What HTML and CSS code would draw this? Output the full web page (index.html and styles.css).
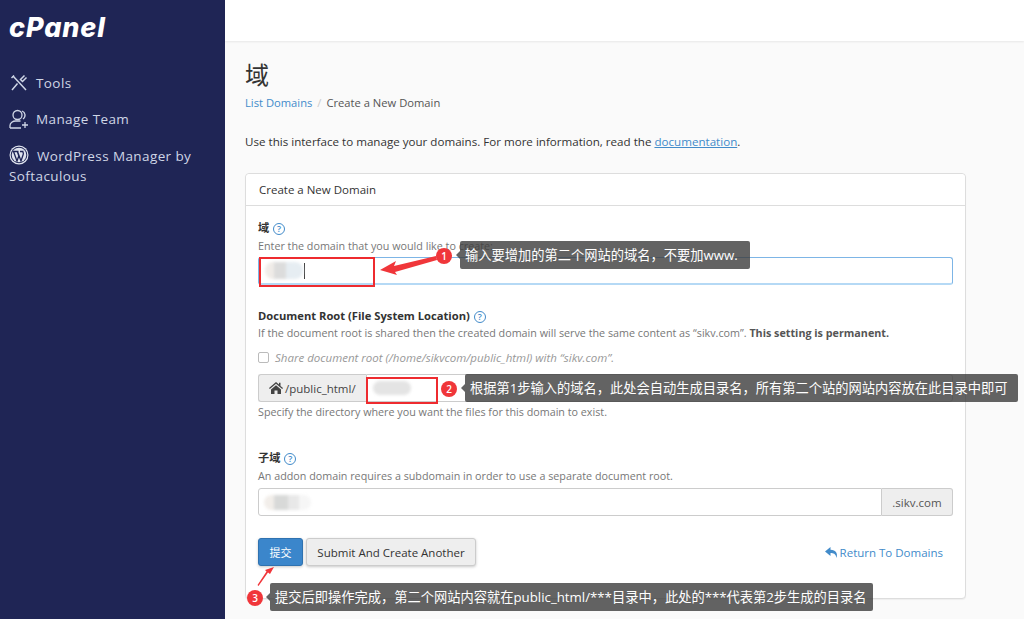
FILE: index.html
```html
<!DOCTYPE html>
<html lang="zh">
<head>
<meta charset="utf-8">
<title>cPanel - 域</title>
<link rel="stylesheet" href="styles.css">
</head>
<body>
<div class="app">
  <aside class="sidebar">
    <div class="logo">cPanel</div>
    <nav class="nav">
      <a class="nav-item">
        <svg class="nav-icon" viewBox="0 0 20 20" fill="none" stroke="#cfd6e6" stroke-width="1.5"><path d="M4 3l13 14M15.500 2.500l-4 4 2 2 4-4M8.500 10.500L3 17"/><path d="M2.500 5L5 2.500"/></svg>
        <span>Tools</span>
      </a>
      <a class="nav-item">
        <svg class="nav-icon" viewBox="0 0 20 20" fill="none" stroke="#cfd6e6" stroke-width="1.300"><circle cx="8.500" cy="6" r="4.500"/><path d="M13 2a4.500 4.500 0 0 1 1 8M1 19v-2.500c0-2.500 3-4.500 5.500-4.500h5M1 19h11M16 13v6M13 16h6"/></svg>
        <span>Manage Team</span>
      </a>
      <a class="nav-item wp">
        <svg class="nav-icon wp-icon" viewBox="0 0 20 20"><circle cx="10" cy="10" r="9.500" fill="#dfe3ee"/><circle cx="10" cy="10" r="8.300" fill="#1f2555"/><circle cx="10" cy="10" r="7.300" fill="#dfe3ee"/><path d="M4.500 6.500L8 16l1.800-5-1.300-4M8.500 6.500L12 16l2.200-6.500c.5-1.500-.3-3-1-3M3.500 6.500h6M11 6.500h3.500" fill="none" stroke="#1f2555" stroke-width="1.300"/></svg>
        <span>WordPress Manager by Softaculous</span>
      </a>
    </nav>
  </aside>
  <div class="main">
    <header class="topbar"></header>
    <main class="content">
      <h1 class="title">域</h1>
      <ol class="crumbs">
        <li><a>List Domains</a></li>
        <li class="sep">/</li>
        <li>Create a New Domain</li>
      </ol>
      <p class="intro">Use this interface to manage your domains. For more information, read the <a class="doc">documentation</a>.</p>
      <section class="panel">
        <div class="panel-head">Create a New Domain</div>
        <div class="panel-body">
          <div class="field f1">
            <label class="lbl">域 <span class="help">?</span></label>
            <div class="hint">Enter the domain that you would like to create:</div>
            <div class="input focus"><span class="blur b1"></span><span class="caret"></span></div>
          </div>
          <div class="field f2">
            <label class="lbl">Document Root (File System Location) <span class="help">?</span></label>
            <div class="hint">If the document root is shared then the created domain will serve the same content as “sikv.com”. <b>This setting is permanent.</b></div>
            <div class="check"><span class="box"></span><i>Share document root (/home/sikvcom/public_html) with “sikv.com”.</i></div>
            <div class="group">
              <span class="addon left"><svg class="home" viewBox="0 0 14 12"><path fill="#444" d="M7 0L0 6l.8.900L7 1.700l6.200 5.200L14 6l-2.500-2.100V.8H10v1.800zM2 7.500V12h3.500V8.500h3V12H12V7.500L7 3.300z"/></svg>/public_html/</span>
              <div class="input grow"><span class="blur b2"></span></div>
            </div>
            <div class="hint after">Specify the directory where you want the files for this domain to exist.</div>
          </div>
          <div class="field f3">
            <label class="lbl">子域 <span class="help">?</span></label>
            <div class="hint">An addon domain requires a subdomain in order to use a separate document root.</div>
            <div class="group">
              <div class="input grow"><span class="blur b3"></span></div>
              <span class="addon right">.sikv.com</span>
            </div>
          </div>
          <div class="actions">
            <button class="btn primary">提交</button>
            <button class="btn">Submit And Create Another</button>
            <a class="back"><svg class="reply" viewBox="0 0 13 11"><path fill="#428bca" d="M5.500 0L0 4.500 5.500 9V6c3 0 5 .6 6 5 1.500-4.500-.5-8-6-8.200z"/></svg>Return To Domains</a>
          </div>
        </div>
      </section>
    </main>
  </div>

  <div class="mark m1"></div>
  <div class="mark m2"></div>
  <svg class="arrows" viewBox="0 0 1024 619">
    <path fill="#f0363a" d="M380 270l16-9-2 5 42-10 1 4-42 12 2 3z"/>
    <path fill="#f0363a" d="M274 567l-9 3 1.500 1.500-9 13.500 1 1 9.500-13.500 2 1.500z"/>
  </svg>
  <div class="tip t1">输入要增加的第二个网站的域名，不要加www.</div>
  <div class="tip t2">根据第1步输入的域名，此处会自动生成目录名，所有第二个站的网站内容放在此目录中即可</div>
  <div class="tip t3">提交后即操作完成，第二个网站内容就在public_html/***目录中，此处的***代表第2步生成的目录名</div>
  <div class="num n1">1</div>
  <div class="num n2">2</div>
  <div class="num n3">3</div>
</div>
</body>
</html>
```
FILE: styles.css
```css
* { box-sizing: border-box; }
html, body { margin: 0; height: 100%; }
body { font-family: "Open Sans", "Noto Sans CJK SC", sans-serif; font-size: 11.500px; color: #333; overflow: hidden; }
.app { display: flex; width: 1024px; height: 619px; position: relative; overflow: hidden; }

.sidebar { width: 225px; flex: none; background: #1f2555; color: #cfd6e6; padding: 12px 9px; }
.logo { font-family: Inter, sans-serif; font-weight: 800; font-style: italic; font-size: 27px; line-height: 32px; color: #fff; letter-spacing: .9px; }
.nav { margin-top: 28px; font-size: 13.500px; letter-spacing: .4px; }
.nav-item { display: flex; align-items: center; gap: 7px; height: 21px; margin-bottom: 15.500px; }
.nav-icon { width: 20px; height: 20px; flex: none; }
.nav-item.wp { display: block; height: auto; line-height: 20px; }
.wp-icon { vertical-align: -4px; margin-right: 4px; }

.main { flex: 1; min-width: 0; background: #fafafa; display: flex; flex-direction: column; }
.topbar { height: 41px; background: #fff; box-shadow: 0 1px 2px rgba(0,0,0,.08); flex: none; }
.content { padding: 0 58px 0 20px; }
.title { font-size: 24px; font-weight: 400; line-height: 34px; margin: 17px 0 0; color: #333; }
.crumbs { list-style: none; display: flex; margin: 1px 0 0; padding: 0; line-height: 20px; color: #555; font-size: 11.200px; }
.crumbs a { color: #428bca; }
.sep { color: #ccc; padding: 0 5px; }
.intro { margin: 19px 0 0; line-height: 20px; color: #333; font-size: 11.600px; }
.doc { color: #428bca; text-decoration: underline; }

.panel { margin-top: 21px; height: 426px; background: #fff; border: 1px solid #ddd; border-radius: 4px; box-shadow: 0 1px 1px rgba(0,0,0,.05); }
.panel-head { height: 32px; line-height: 31px; padding-left: 13px; border-bottom: 1px solid #ddd; background: #fff; border-radius: 4px 4px 0 0; color: #333; }
.panel-body { padding: 0 12px; }
.lbl { display: block; font-weight: 700; line-height: 16px; color: #333; font-size: 11.200px; }
.help { display: inline-flex; width: 12px; height: 12px; border: 1px solid #428bca; border-radius: 50%; color: #428bca; font-size: 9px; font-weight: 600; line-height: 1; align-items: center; justify-content: center; vertical-align: 0; margin-left: 1px; }
.hint { font-size: 10.760px; line-height: 16px; color: #777; }
.hint b { color: #555; }
.field { display: block; }
.f1 { padding-top: 14px; }
.f2 { padding-top: 23px; }
.f3 { padding-top: 30px; }
.f1 .hint { margin-top: 2px; }
.f2 .hint { margin-top: 1px; }
.f3 .hint { margin-top: 2px; }
.hint.after { margin-top: 2px; }
.input { height: 28px; background: #fff; border: 1px solid #ccc; border-radius: 3px; position: relative; display: flex; align-items: center; }
.f1 .input { margin-top: 3px; height: 28px; border-color: #7db5e6; border-bottom: 2px solid #b5d9f5; }
.grow { flex: 1; border-radius: 0 3px 3px 0; }
.f3 .grow { border-radius: 3px 0 0 3px; }
.check { display: flex; align-items: center; gap: 6px; margin-top: 8px; height: 16px; color: #999; font-size: 11.500px; }
.box { width: 11px; height: 11px; border: 1px solid #bbb; border-radius: 2px; background: #fff; flex: none; }
.group { display: flex; height: 28px; margin-top: 9px; }
.f3 .group { margin-top: 4px; }
.addon { background: #eee; border: 1px solid #ccc; display: flex; align-items: center; color: #555; flex: none; }
.addon.left { width: 108px; padding-left: 10px; border-right: 0; border-radius: 3px 0 0 3px; color: #444; }
.addon.right { width: 71px; justify-content: center; border-left: 0; border-radius: 0 3px 3px 0; }
.home { width: 14px; height: 12px; margin-right: 2px; }
.blur { display: block; border-radius: 8px; filter: blur(1.500px); }
.b1 { width: 38px; height: 17px; margin-left: 6px; background: linear-gradient(90deg, #f0ece8 0 25%, #dcdcdc 25% 55%, #e6edf2 55%); }
.caret { width: 1px; height: 16px; background: #444; margin-left: 1px; }
.b2 { width: 38px; height: 14px; margin-left: 6px; background: #e4e4e4; }
.b3 { width: 47px; height: 15px; margin-left: 5px; background: linear-gradient(90deg, #f2eeea 0 22%, #d8d9d8 22% 52%, #e8e8e8 52% 75%, #f6f6f6 75%); }

.actions { display: flex; align-items: center; margin-top: 22px; height: 28px; }
.btn { font: inherit; height: 28px; border: 1px solid #ccc; background: #eee; color: #333; border-radius: 3px; padding: 0; width: 170px; margin-right: 3px; box-shadow: 0 1px 3px rgba(0,0,0,.22); }
.btn.primary { width: 45px; padding: 0; background: #3b86cb; border-color: #2f72b0; color: #fff; font-size: 11px; }
.back { margin-left: auto; margin-right: 10px; color: #428bca; display: flex; align-items: center; }
.reply { width: 13px; height: 11px; margin-right: 2px; }

.mark { position: absolute; border: 2px solid #ee2b2f; }
.m1 { left: 259px; top: 257px; width: 116px; height: 30px; }
.m2 { left: 366px; top: 377px; width: 72px; height: 27px; }
.arrows { position: absolute; left: 0; top: 0; width: 1024px; height: 619px; }
.num { position: absolute; width: 16px; height: 16px; border-radius: 50%; background: #f0363a; color: #fff; font-size: 10px; font-weight: 600; text-align: center; line-height: 16px; }
.n1 { left: 436px; top: 248px; }
.n2 { left: 441px; top: 381px; }
.n3 { left: 247px; top: 590px; }
.tip { position: absolute; height: 28px; line-height: 28px; background: rgba(60,60,60,.8); border-radius: 2px; color: #fff; font-size: 13.250px; padding: 0 5px; white-space: nowrap; }
.tip::before { content: ""; position: absolute; left: -4px; top: 10px; border: 4px solid transparent; border-left: 0; border-right-color: rgba(60,60,60,.8); }
.t1 { left: 460px; top: 241px; width: 290px; }
.t2 { left: 465px; top: 374px; width: 553px; }
.t3 { left: 270px; top: 583px; width: 603px; }
```
